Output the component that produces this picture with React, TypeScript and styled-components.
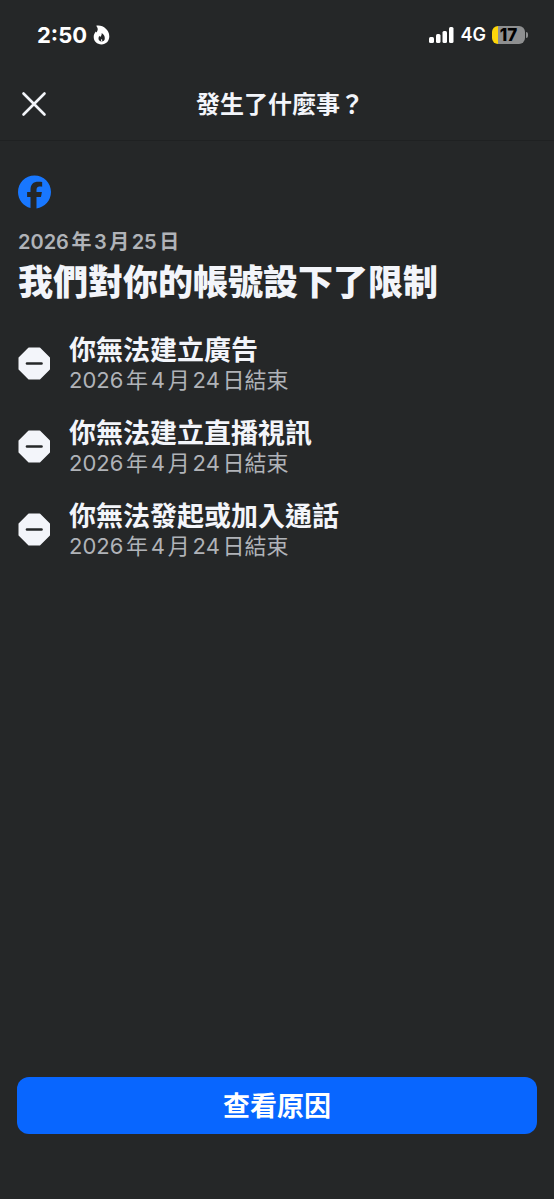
import React from 'react';
import styled, { createGlobalStyle } from 'styled-components';

const colors = {
  surface: '#252728',
  divider: '#1f2122',
  text: '#f3f5fa',
  muted: '#b0b3b8',
  brand: '#1877ff',
  primary: '#0866ff',
};

const GlobalStyle = createGlobalStyle`
  *, *::before, *::after { box-sizing: border-box; }
  body {
    margin: 0;
    background: ${colors.surface};
    color: ${colors.text};
    font-family: Inter, "Noto Sans CJK TC", sans-serif;
    text-autospace: normal;
  }
  h1, h2, h3, p, ul { margin: 0; padding: 0; }
`;

const Screen = styled.div`
  display: flex;
  flex-direction: column;
  min-height: 100vh;
`;

const StatusBar = styled.div`
  display: flex;
  align-items: center;
  justify-content: space-between;
  height: 68px;
  padding: 2px 26px 0 37px;
  color: #fff;
`;

const StatusGroup = styled.div`
  display: flex;
  align-items: center;
  gap: 6px;
`;

const Clock = styled.span`
  font-size: 22px;
  line-height: 24px;
  font-weight: 700;
`;

const Network = styled.span`
  font-size: 18px;
  line-height: 24px;
  font-weight: 600;
`;

const Battery = styled.div`
  display: flex;
  align-items: center;
  gap: 1px;
`;

const BatteryBody = styled.div`
  width: 33px;
  height: 18px;
  border-radius: 6px;
  background: linear-gradient(to right, #fdd60a 6px, #8e8f90 6px);
  color: #000;
  font-size: 17px;
  line-height: 18px;
  font-weight: 800;
  text-align: center;
`;

const BatteryTip = styled.span`
  width: 2px;
  height: 6px;
  border-radius: 0 2px 2px 0;
  background: #8e8f90;
`;

const Header = styled.header`
  display: grid;
  grid-template-columns: 32px 1fr 28px;
  align-items: center;
  height: 73px;
  padding: 0 16px 0 18px;
  border-bottom: 1px solid ${colors.divider};
`;

const CloseButton = styled.button`
  display: flex;
  align-items: center;
  justify-content: center;
  width: 32px;
  height: 32px;
  padding: 0;
  border: 0;
  background: none;
  color: ${colors.text};
  cursor: pointer;
`;

const HeaderTitle = styled.h1`
  padding-bottom: 2px;
  font-family: "Noto Sans CJK TC", sans-serif;
  font-size: 24px;
  line-height: 32px;
  font-weight: 700;
  text-align: center;
`;

const Main = styled.main`
  display: flex;
  flex: 1;
  flex-direction: column;
  padding: 34px 18px 24px;
`;

const Brand = styled.div`
  display: flex;
  height: 34px;
  margin-bottom: 19px;
`;

const IssueDate = styled.p`
  font-size: 20px;
  line-height: 28px;
  font-weight: 600;
  color: ${colors.muted};
`;

const Title = styled.h2`
  font-family: "Noto Sans CJK TC", sans-serif;
  font-size: 35px;
  line-height: 48px;
  font-weight: 900;
`;

const Restrictions = styled.ul`
  display: flex;
  flex-direction: column;
  gap: 20px;
  margin-top: 28px;
  list-style: none;
`;

const Restriction = styled.li`
  display: flex;
  align-items: center;
  gap: 18px;
`;

const RestrictionTitle = styled.h3`
  font-family: "Noto Sans CJK TC", sans-serif;
  font-size: 27px;
  line-height: 34px;
  font-weight: 700;
`;

const RestrictionEnd = styled.p`
  font-size: 22px;
  line-height: 29px;
  height: 29px;
  color: ${colors.muted};
`;

const Footer = styled.footer`
  padding: 0 17px 65px;
`;

const PrimaryButton = styled.button`
  display: block;
  width: 100%;
  height: 57px;
  padding: 0 16px 2px;
  border: 0;
  border-radius: 12px;
  background: ${colors.primary};
  color: #fff;
  font-family: "Noto Sans CJK TC", sans-serif;
  font-size: 27px;
  line-height: 34px;
  font-weight: 700;
  cursor: pointer;
`;

const FlameIcon = () => (
  <svg width="17" height="20" viewBox="0 0 17 20" aria-hidden="true">
    <path
      d="M3.2.7C9.5-.6 16.3 4.600 16.300 11.200C16.300 16 13 19.400 8.500 19.400C4 19.400.7 16.300.7 12C.7 9.600 1.600 8 2.800 6.500L3.500 7.500C4.400 6.200 4.900 5 4.700 3.800C4.500 2.500 4 1.600 3.200.7Z"
      fill="#fff"
    />
    <path
      d="M8.700 8C11 9.500 11.800 11.300 11.800 13.200C11.800 15.300 10.400 16.400 8.600 16.400C6.700 16.400 5.500 15.300 5.500 13.500C5.500 12.400 5.800 11.600 6.400 10.800L7.100 12C8.200 11 8.900 9.700 8.700 8Z"
      fill={colors.surface}
    />
    <path d="M8.700 14C9.400 14.700 9.500 16 8.600 16.400C7.700 16 8 14.700 8.700 14Z" fill="#fff" />
  </svg>
);

const SignalIcon = () => (
  <svg width="26" height="18" viewBox="0 0 26 18" fill="currentColor" aria-hidden="true">
    <rect x="0" y="11" width="5" height="6" rx="1.500" />
    <rect x="7" y="8" width="4.500" height="9" rx="1.500" />
    <rect x="13.500" y="5" width="4.500" height="12" rx="1.500" />
    <rect x="20" y="1" width="4.500" height="16" rx="1.500" />
  </svg>
);

const CloseIcon = () => (
  <svg width="26" height="26" viewBox="0 0 26 26" aria-hidden="true">
    <path d="M2.500 2.500L23.500 23.500M23.500 2.500L2.500 23.500" stroke="currentColor" strokeWidth="2.600" strokeLinecap="round" />
  </svg>
);

const FacebookLogo = () => (
  <svg width="33" height="34" viewBox="0 0 24 24" role="img" aria-label="Facebook">
    <path
      fill={colors.brand}
      d="M9.101 23.691v-7.98H6.627v-3.667h2.474v-1.58c0-4.085 1.848-5.978 5.858-5.978.401 0 .955.042 1.468.103a8.68 8.68 0 0 1 1.141.195v3.325a8.623 8.623 0 0 0-.653-.036 26.805 26.805 0 0 0-.733-.009c-.707 0-1.259.096-1.675.309a1.686 1.686 0 0 0-.679.622c-.258.42-.374.995-.374 1.752v1.297h3.919l-.386 2.103-.287 1.564h-3.246v8.245C19.396 23.238 24 18.179 24 12.044c0-6.627-5.373-12-12-12s-12 5.373-12 12c0 5.628 3.874 10.35 9.101 11.647Z"
    />
  </svg>
);

const BlockedIcon = () => (
  <svg width="33" height="33" viewBox="0 0 33 33" aria-hidden="true">
    <path
      d="M11 1.500H21.500L31 11V22L21.500 31.500H11L1.500 22V11Z"
      fill={colors.text}
      stroke={colors.text}
      strokeWidth="2"
      strokeLinejoin="round"
    />
    <path d="M9 16.500H23.500" stroke={colors.surface} strokeWidth="2.600" strokeLinecap="round" />
  </svg>
);

const restrictions = [
  { title: '你無法建立廣告', end: '2026年4月24日結束' },
  { title: '你無法建立直播視訊', end: '2026年4月24日結束' },
  { title: '你無法發起或加入通話', end: '2026年4月24日結束' },
];

export default function App() {
  return (
    <Screen lang="zh-Hant">
      <GlobalStyle />
      <StatusBar>
        <StatusGroup>
          <Clock>2:50</Clock>
          <FlameIcon />
        </StatusGroup>
        <StatusGroup>
          <SignalIcon />
          <Network>4G</Network>
          <Battery>
            <BatteryBody>17</BatteryBody>
            <BatteryTip />
          </Battery>
        </StatusGroup>
      </StatusBar>
      <Header>
        <CloseButton type="button" aria-label="關閉">
          <CloseIcon />
        </CloseButton>
        <HeaderTitle>發生了什麼事？</HeaderTitle>
      </Header>
      <Main>
        <Brand>
          <FacebookLogo />
        </Brand>
        <IssueDate>2026年3月25日</IssueDate>
        <Title>我們對你的帳號設下了限制</Title>
        <Restrictions>
          {restrictions.map((item) => (
            <Restriction key={item.title}>
              <BlockedIcon />
              <div>
                <RestrictionTitle>{item.title}</RestrictionTitle>
                <RestrictionEnd>{item.end}</RestrictionEnd>
              </div>
            </Restriction>
          ))}
        </Restrictions>
      </Main>
      <Footer>
        <PrimaryButton type="button">查看原因</PrimaryButton>
      </Footer>
    </Screen>
  );
}
